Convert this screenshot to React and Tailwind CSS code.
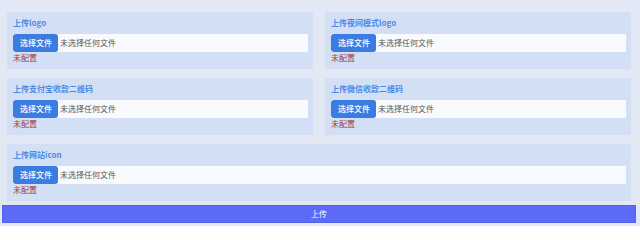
import React from "react";

const fields = [
  { id: "logo", label: "上传logo" },
  { id: "logoDark", label: "上传夜间模式logo" },
  { id: "alipay", label: "上传支付宝收款二维码" },
  { id: "wechat", label: "上传微信收款二维码" },
  { id: "icon", label: "上传网站icon", wide: true },
];

const UploadField = ({ label, wide }) => {
  return (
    <div
      className={`bg-[#d3dff5] pl-[6px] pr-[5px] pt-[5px] pb-[5px] ${
        wide ? "col-span-2" : ""
      }`}
    >
      <div className="text-[8px] leading-[12px] font-bold text-[#4b8be6]">{label}</div>
      <div className="mt-[5px] flex h-[18px] items-stretch bg-[#f9fafe]">
        <span className="flex items-center rounded-[3px] bg-[#3b7ce0] pl-[7px] pr-[6px] text-[8px] font-medium text-white">
          选择文件
        </span>
        <span className="flex items-center pl-[2px] text-[8px] text-[#555]">未选择任何文件</span>
      </div>
      <div className="text-[8px] leading-[12px] text-[#a23c3c]">未配置</div>
    </div>
  );
};

const App = () => {
  return (
    <div
      className="min-h-[226px] w-[640px] bg-[#e2e9f5] pt-[12px]"
      style={{ fontFamily: '"Noto Sans CJK SC", "Noto Sans", sans-serif' }}
    >
      <div className="ml-[7px] mr-[9px] grid grid-cols-2 gap-x-[12px] gap-y-[9px]">
        {fields.map((f) => (
          <UploadField key={f.id} label={f.label} wide={f.wide} />
        ))}
      </div>
      <button className="ml-[2px] mt-[4px] flex h-[18px] w-[634px] items-center justify-center border border-[#5062ee] bg-[#5b6bf8] text-[8px] text-white">
        上传
      </button>
    </div>
  );
};

export default App;
